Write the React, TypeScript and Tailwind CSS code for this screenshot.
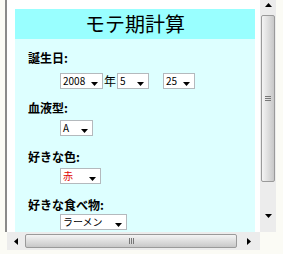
import React from "react";

const jp = { fontFamily: '"Noto Sans CJK JP", "Noto Sans", sans-serif' };

function Arrow({ dir, className = "" }: { dir: "up" | "down" | "left" | "right"; className?: string }) {
  const pts: Record<string, string> = {
    down: "0,0 7,0 3.5,4",
    up: "0,4 7,4 3.5,0",
    left: "4,0 4,7 0,3.5",
    right: "0,0 0,7 4,3.5",
  };
  const vertical = dir === "up" || dir === "down";
  return (
    <svg
      width={vertical ? 7 : 4}
      height={vertical ? 4 : 7}
      viewBox={vertical ? "0 0 7 4" : "0 0 4 7"}
      className={className}
    >
      <polygon points={pts[dir]} fill="#000" />
    </svg>
  );
}

function Select({ value, width, red }: { value: string; width: number; red?: boolean }) {
  return (
    <div
      className="h-[16px] bg-white border border-[#b4b9bd] flex items-center justify-between pl-[2px] pr-[4px] shrink-0"
      style={{ width }}
    >
      <span
        className={`text-[10px] leading-none ${red ? "text-[#e00000]" : "text-black"}`}
        style={jp}
      >
        {value}
      </span>
      <Arrow dir="down" className="mt-[5px]" />
    </div>
  );
}

function Label({ children }: { children: React.ReactNode }) {
  return (
    <div className="text-[12px] font-bold leading-[16px] text-black" style={jp}>
      {children}
    </div>
  );
}

export default function App() {
  return (
    <div className="w-[283px] h-[254px] bg-[#fbfbf5] overflow-hidden flex flex-col">
      <div className="flex h-[232px]">
        {/* viewport */}
        <div className="ml-[5px] w-[255px] h-[232px] border-l-2 border-[#8a8a8a] bg-white pl-[8px] pr-[5px] pt-[9px] flex flex-col">
          <div className="h-[30px] bg-[#99ffff] flex items-center justify-center">
            <span className="text-[20px] leading-none text-black" style={jp}>
              モテ期計算
            </span>
          </div>
          <div className="flex-1 bg-[#ddffff] pl-[13px] pt-[11px] flex flex-col">
            <Label>誕生日:</Label>
            <div className="flex items-center mt-[7px] ml-[32px] h-[16px]">
              <Select value="2008" width={43} />
              <span className="text-[12px] leading-none text-black mx-[1px]" style={jp}>
                年
              </span>
              <Select value="5" width={32} />
              <div className="w-[14px]" />
              <Select value="25" width={32} />
            </div>

            <div className="mt-[11px]">
              <Label>血液型:</Label>
            </div>
            <div className="mt-[4px] ml-[32px] flex">
              <Select value="A" width={33} />
            </div>

            <div className="mt-[13px]">
              <Label>好きな色:</Label>
            </div>
            <div className="mt-[3px] ml-[32px] flex">
              <Select value="赤" width={41} red />
            </div>

            <div className="mt-[13px]">
              <Label>好きな食べ物:</Label>
            </div>
            <div className="mt-[1px] ml-[32px] flex">
              <Select value="ラーメン" width={67} />
            </div>
          </div>
        </div>
        {/* vertical scrollbar */}
        <div className="w-[16px] h-[232px] bg-[#ececec] flex flex-col items-center">
          <div className="h-[15px] w-full flex items-start justify-center pt-[3px]">
            <Arrow dir="up" />
          </div>
          <div className="w-[14px] h-[167px] rounded-[2px] border border-[#9a9a9a] bg-gradient-to-r from-[#f4f4f4] via-[#dedede] to-[#c8c8c8] flex flex-col items-center justify-center gap-[1px]">
            <div className="w-[6px] h-[1px] bg-[#777]" />
            <div className="w-[6px] h-[1px] bg-[#777]" />
            <div className="w-[6px] h-[1px] bg-[#777]" />
          </div>
          <div className="flex-1" />
          <div className="h-[19px] w-full flex items-start justify-center pt-[1px]">
            <Arrow dir="down" />
          </div>
        </div>
        <div className="flex-1" />
      </div>
      {/* horizontal scrollbar */}
      <div className="flex h-[18px]">
        <div className="ml-[7px] w-[253px] h-[18px] bg-[#ececec] flex items-center">
          <div className="w-[18px] flex items-center justify-center">
            <Arrow dir="left" />
          </div>
          <div className="w-[212px] h-[14px] rounded-[2px] border border-[#9a9a9a] bg-gradient-to-b from-[#f4f4f4] via-[#dedede] to-[#c8c8c8] flex items-center justify-center gap-[1px]">
            <div className="w-[1px] h-[6px] bg-[#777]" />
            <div className="w-[1px] h-[6px] bg-[#777]" />
            <div className="w-[1px] h-[6px] bg-[#777]" />
          </div>
          <div className="flex-1 flex items-center justify-center">
            <Arrow dir="right" />
          </div>
        </div>
      </div>
    </div>
  );
}
